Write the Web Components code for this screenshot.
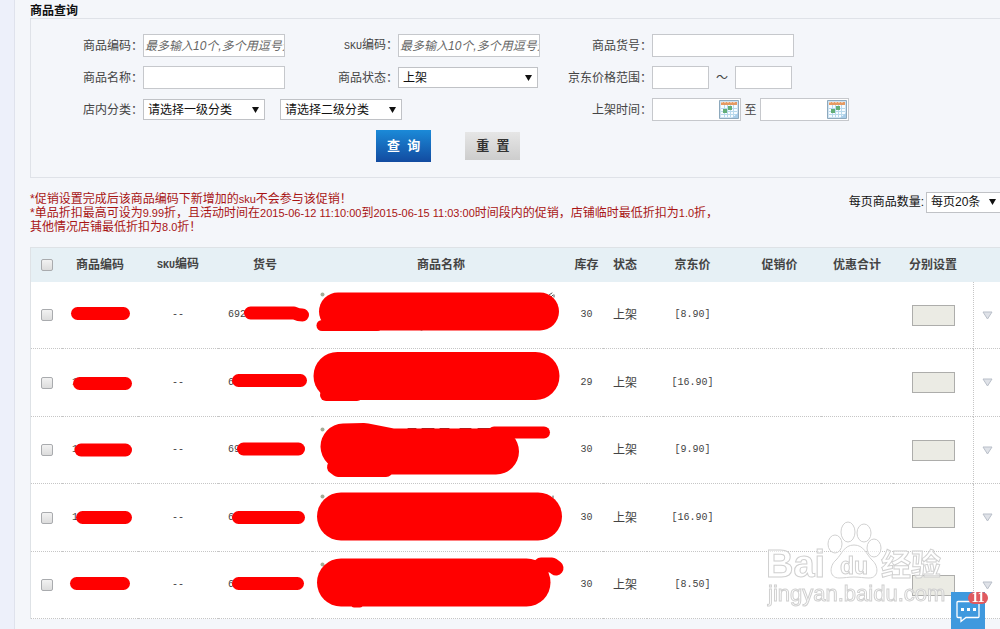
<!DOCTYPE html>
<html lang="zh-CN">
<head>
<meta charset="utf-8">
<title>商品查询</title>
<style>
  html, body { height: 100%; }
  body {
    margin: 0;
    overflow: hidden;
    background: #f4f6fa;
    color: #444;
    font: 12px/14px "Liberation Sans", "Noto Sans CJK SC", sans-serif;
  }
</style>
</head>
<body>
<goods-page>
  <search-panel></search-panel>
  <promo-notice></promo-notice>
  <goods-table></goods-table>
</goods-page>
<site-watermark></site-watermark>
<chat-button count="11"></chat-button>

<script>
(function ( doc ) {
  /**
   * Register an element whose shadow root is cloned from a template.
   */
  function define ( name, html, setup ) {
    const template = doc.createElement('template');
    template.innerHTML = html;

    customElements.define(name, class extends HTMLElement {
      constructor () {
        super();
        this.attachShadow({ mode: 'open' }).appendChild(template.content.cloneNode(true));
      }

      connectedCallback () {
        if ( setup ) setup(this, this.shadowRoot);
      }
    });
  }

  /**
   * Page frame: the side rail and the main column.
   */
  define('goods-page', `
    <style>
      :host { display: flex; min-height: 100%; }
      .rail { flex: none; width: 14px; background: #edf0fa; border-right: 1px solid #dfe2ec; }
      main { flex: 1; min-width: 0; padding-left: 15px; }
    </style>
    <div class="rail"></div>
    <main><slot></slot></main>
  `);

  /**
   * Label and control side by side.
   */
  define('field-row', `
    <style>
      :host { display: flex; align-items: center; height: 23px; }
      .label { flex: none; width: 112px; text-align: right; }
      .control { display: flex; align-items: center; }
    </style>
    <span class="label"><slot name="label"></slot></span>
    <span class="control"><slot></slot></span>
  `);

  define('select-box', `
    <style>
      :host { display: inline-grid; align-items: center; width: 122px; color: #111; }
      ::slotted(select) {
        grid-area: 1 / 1;
        appearance: none;
        box-sizing: border-box;
        width: 100%;
        height: 21px;
        margin: 0;
        padding: 0 20px 0 4px;
        border: 1px solid #c0c2c6;
        border-radius: 0;
        background: #fff;
        color: inherit;
        font: inherit;
      }
      svg { grid-area: 1 / 1; justify-self: end; margin-right: 6px; pointer-events: none; }
    </style>
    <slot></slot>
    <svg width="7" height="6" aria-hidden="true"><path d="M0 0h7L3.5 6z" fill="#111"/></svg>
  `);

  define('date-box', `
    <style>
      :host { display: inline-grid; align-items: center; width: 89px; }
      ::slotted(input) { grid-area: 1 / 1; }
      button { grid-area: 1 / 1; justify-self: end; display: block; margin: 0 2px 0 0; padding: 0; border: 0; background: none; }
      svg { display: block; }
    </style>
    <slot></slot>
    <button type="button" aria-label="日历">
      <svg width="20" height="19" viewBox="0 0 20 19">
        <path d="M.5.5h19v18H.5z" fill="#cfe3f2" stroke="#8da9bd"/>
        <path d="M2 5h16v12H2z" fill="#f7fcff"/>
        <path d="M2 2h16v3H2z" fill="#e59a63"/>
        <path d="M3 2v1M6 2v1M9 2v1M12 2v1M15 2v1" stroke="#fff3e6"/>
        <path d="M2 8.500h16M2 11.500h16M2 14.500h16M5.500 5v12M8.500 5v12M11.500 5v12M14.500 5v12" stroke="#b8d9ec"/>
        <path d="M4 9h4v4H4zM9 6h4v4H9z" fill="#62ae78"/>
        <path d="M13 18l6-5v5z" fill="#a8cde8"/>
      </svg>
    </button>
  `);

  define('search-panel', `
    <style>
      :host { display: block; }
      h2 { margin: 0; padding-top: 4px; font-size: 12px; line-height: 14px; color: #111; }
      form { margin-right: -2px; padding: 15px 0; border: 1px solid #dfe2e8; }
      .fields { display: grid; grid-template-columns: 255px 254px 1fr; row-gap: 9px; }
      .wide { grid-column: span 2; }
      .latin { font: 10px/14px "Liberation Mono", monospace; }
      input {
        box-sizing: border-box;
        width: 142px;
        height: 23px;
        margin: 0;
        padding: 0 0 0 1px;
        border: 1px solid #c6c8cc;
        background: #fff;
        color: #444;
        font: inherit;
      }
      input::placeholder { color: #666; font-style: italic; }
      input.short { width: 57px; }
      date-box input { width: 100%; padding-right: 24px; }
      .status { width: 140px; }
      .second { margin-left: 15px; }
      .tilde { width: 26px; text-align: center; }
      .until { width: 19px; text-align: center; }
      .actions { display: flex; align-items: center; gap: 34px; padding: 9px 0 0 345px; }
      .actions button {
        height: 28px;
        padding: 0 11px;
        border: 0;
        white-space: pre;
        font: bold 13px/14px "Liberation Sans", "Noto Sans CJK SC", sans-serif;
      }
      .actions .query { height: 32px; background: linear-gradient(#1b8ad8, #124ba0); color: #fff; }
      .actions .reset { background: linear-gradient(#e6e6e6, #cdcdcd); color: #333; }
    </style>
    <h2>商品查询</h2>
    <form>
      <div class="fields">
        <field-row>
          <label slot="label" for="code">商品编码：</label>
          <input id="code" placeholder="最多输入10个,多个用逗号分隔">
        </field-row>
        <field-row>
          <label slot="label" for="sku"><span class="latin">SKU</span>编码：</label>
          <input id="sku" placeholder="最多输入10个,多个用逗号分隔">
        </field-row>
        <field-row>
          <label slot="label" for="item">商品货号：</label>
          <input id="item">
        </field-row>
        <field-row>
          <label slot="label" for="name">商品名称：</label>
          <input id="name">
        </field-row>
        <field-row>
          <label slot="label" for="status">商品状态：</label>
          <select-box class="status"><select id="status"><option>上架</option></select></select-box>
        </field-row>
        <field-row>
          <label slot="label" for="low">京东价格范围：</label>
          <input id="low" class="short">
          <span class="tilde">～</span>
          <input class="short" aria-label="最高价格">
        </field-row>
        <field-row class="wide">
          <label slot="label" for="level1">店内分类：</label>
          <select-box><select id="level1"><option>请选择一级分类</option></select></select-box>
          <select-box class="second"><select aria-label="二级分类"><option>请选择二级分类</option></select></select-box>
        </field-row>
        <field-row>
          <label slot="label" for="from">上架时间：</label>
          <date-box><input id="from"></date-box>
          <label class="until" for="to">至</label>
          <date-box><input id="to"></date-box>
        </field-row>
      </div>
      <div class="actions">
        <button type="button" class="query">查  询</button>
        <button type="reset" class="reset">重  置</button>
      </div>
    </form>
  `);

  /**
   * Red notes on the promotion, with the page size at the right.
   */
  define('promo-notice', `
    <style>
      :host { display: flex; justify-content: space-between; margin: 14px -2px 13px 0; }
      .notes { color: #a81414; }
      p { margin: 0; }
      .n { font-size: 11px; }
      .size { display: flex; align-items: center; gap: 2px; height: 20px; color: #111; }
      select-box { width: 76px; }
    </style>
    <div class="notes">
      <p>*促销设置完成后该商品编码下新增加的<span class="n">sku</span>不会参与该促销！</p>
      <p>*单品折扣最高可设为<span class="n">9.99</span>折，且活动时间在<span class="n">2015-06-12 11:10:00</span>到<span class="n">2015-06-15 11:03:00</span>时间段内的促销，店铺临时最低折扣为<span class="n">1.0</span>折，</p>
      <p>其他情况店铺最低折扣为<span class="n">8.0</span>折！</p>
    </div>
    <div class="size">
      <label for="size">每页商品数量:</label>
      <select-box><select id="size"><option>每页20条</option></select></select-box>
    </div>
  `);

  /**
   * Marker strokes laid over a cell, measured from the cell's corner.
   */
  define('ink-mark', `
    <style>
      :host { position: absolute; inset: 0; color: #f00; pointer-events: none; }
      svg { display: block; width: 100%; height: 100%; overflow: visible; }
      path { fill: none; stroke: currentColor; stroke-linecap: round; stroke-linejoin: round; }
    </style>
    <svg aria-hidden="true"></svg>
  `, function ( host, root ) {
    const dot = host.hasAttribute('dot') ? '<circle cx="10.500" cy="12.500" r="2" fill="#a5ad99"/>' : '';

    root.querySelector('svg').innerHTML = dot + host.getAttribute('strokes').split('|').map(function ( part ) {
      const [ width, d, color ] = part.split(':');
      return `<path stroke-width="${width}" d="${d}"${color ? ` style="stroke: ${color}"` : ''}/>`;
    }).join('');
  });

  // each stroke is "width:path", with a colour after it when it is not red
  const goods = [
    {
      code: '', item: '692', stock: 30, price: '8.90', dot: true,
      marks: [
        '13:M15.500 31.500H61.500',
        '13:M32.500 31H76Q80 33 84.500 33',
        '1:M237 13l3-2M239 15l2-2M242 13v2M109 48h1:#555|38:M26 29.500H228|11:M10 43.500L65 43.500'
      ]
    },
    {
      code: '1', item: '6', stock: 29, price: '16.90',
      marks: [
        '13:M17.500 34.500H63.500',
        '13:M20.500 31.500H82.500',
        '48:M25.500 27H223.500|12:M14 46L45 46'
      ]
    },
    {
      code: '1', item: '69', stock: 30, price: '9.90', dot: true,
      marks: [
        '13:M19 33H63.500',
        '13:M25.500 32H80.500',
        '1:M96 11.500h8M110 11.500h12M128 11.500h9M148 11.500h11M166 11.500h20:#733|46:M31.500 29.500L52 29L80 34.500H184|12:M182 15.500H232|14:M22 50L26 53H74'
      ]
    },
    {
      code: '1', item: '6', stock: 30, price: '16.90', dot: true,
      marks: [
        '13:M20.500 33.500H63.500',
        '13:M20.500 33.500H80.500',
        '1:M237 13l2 2M241 12v2:#555|48:M29 32.500H226'
      ]
    },
    {
      code: '', item: '6', stock: 30, price: '8.50', dot: true,
      marks: [
        '13:M14.500 31.500H61.500',
        '13:M20.500 31.500H79.500',
        '48:M29 30.500H214.500|15:M229 13H240L244 16|5:M42 53H48'
      ]
    }
  ];

  const columns = [
    [ '商品编码', 76 ], [ '<span class="latin">SKU</span>编码', 80 ], [ '货号', 94 ], [ '商品名称', 0 ],
    [ '库存', 33 ], [ '状态', 44 ], [ '京东价', 91 ], [ '促销价', 83 ],
    [ '优惠合计', 72 ], [ '分别设置', 80 ], [ '', 27 ]
  ];

  function mark ( strokes, dot ) {
    return `<ink-mark strokes="${strokes}"${dot ? ' dot' : ''}></ink-mark>`;
  }

  function row ( g, i ) {
    return `
      <tr>
        <td><input type="checkbox" aria-label="选择第${i + 1}行"></td>
        <td class="code">${g.code}${mark(g.marks[0])}</td>
        <td class="num">--</td>
        <td class="item">${g.item}${mark(g.marks[1])}</td>
        <td>${mark(g.marks[2], g.dot)}</td>
        <td class="num">${g.stock}</td>
        <td>上架</td>
        <td class="num">[${g.price}]</td>
        <td></td>
        <td></td>
        <td><input class="set" disabled aria-label="分别设置"></td>
        <td class="more">
          <button type="button" aria-label="展开">
            <svg width="11" height="9"><path d="M1 1h9L5.500 8z" fill="#dfe2e8" stroke="#b9bfc9"/></svg>
          </button>
        </td>
      </tr>`;
  }

  define('goods-table', `
    <style>
      :host { display: block; border: solid #dee2e6; border-width: 1px 0 0 1px; background: #fff; }
      table { width: 100%; table-layout: fixed; border-spacing: 0; }
      th { height: 34px; padding: 0; background: #e6f0f5; color: #444; white-space: nowrap; }
      td {
        position: relative;
        box-sizing: border-box;
        height: 67px;
        padding: 0;
        border-bottom: 1px dotted #c6c6c6;
        text-align: center;
      }
      tr:nth-child(even) td { height: 68px; }
      .num, .item, .code { font: 10px/14px "Liberation Mono", monospace; }
      .latin { font-family: "Liberation Mono", monospace; font-size: 10px; }
      .item, .code { padding-left: 10px; text-align: left; }
      .more { border-left: 1px dotted #c6c6c6; }
      input[type=checkbox] {
        appearance: none;
        display: block;
        box-sizing: border-box;
        width: 12px;
        height: 12px;
        margin: 0 auto;
        border: 1px solid #a9abae;
        border-radius: 2px;
        background: linear-gradient(#f2f2f2, #dcdcdc);
      }
      .set {
        display: block;
        box-sizing: border-box;
        width: 43px;
        height: 21px;
        margin: 0 auto;
        border: 1px solid #adadab;
        background: #ebebe4;
      }
      button { display: block; margin: 0 auto; padding: 0; border: 0; background: none; }
      svg { display: block; }
    </style>
    <table>
      <colgroup>
        <col style="width: 31px">
        ${columns.map(c => c[1] ? `<col style="width: ${c[1]}px">` : '<col>').join('')}
      </colgroup>
      <thead>
        <tr>
          <th><input type="checkbox" aria-label="全选"></th>
          ${columns.map(c => `<th>${c[0]}</th>`).join('')}
        </tr>
      </thead>
      <tbody>${goods.map(row).join('')}</tbody>
    </table>
  `);

  define('site-watermark', `
    <style>
      :host { position: fixed; right: 50px; bottom: 19px; pointer-events: none; }
      svg { display: block; }
      text, path, ellipse { fill: #fff; fill-opacity: .6; stroke: #d0d0d0; stroke-width: 1; }
      text { font-family: "Liberation Sans", "Noto Sans CJK SC", sans-serif; }
      .bold { font-weight: bold; }
    </style>
    <svg width="185" height="90" aria-hidden="true">
      <text class="bold" x="1" y="57" font-size="38">Bai</text>
      <ellipse cx="70" cy="24" rx="7" ry="9"/>
      <ellipse cx="83" cy="12" rx="7" ry="10"/>
      <ellipse cx="99" cy="13" rx="7" ry="9"/>
      <ellipse cx="109" cy="28" rx="7" ry="9"/>
      <path d="M89 25c10 0 12 9 18 15 7 6 7 18-3 18-6 0-9-1-15-1s-9 1-15 1c-10 0-10-12-3-18 6-6 8-15 18-15z"/>
      <text class="bold" x="75" y="54" font-size="23">du</text>
      <text class="bold" x="116" y="55" font-size="30">经验</text>
      <text x="3" y="81" font-size="22">jingyan.baidu.com</text>
    </svg>
  `);

  define('chat-button', `
    <style>
      :host { position: fixed; right: 15px; bottom: 0; }
      button { display: block; width: 34px; height: 37px; padding: 0; border: 0; background: #3f99de; }
      svg { display: block; margin: 0 auto; }
      .badge {
        position: absolute;
        top: 0;
        right: -3px;
        width: 20px;
        border-radius: 6px;
        background: #e05a5f;
        color: #fff;
        text-align: center;
        font: bold 14px/12px "Liberation Serif", serif;
      }
    </style>
    <button type="button" aria-label="在线客服">
      <svg width="24" height="24" viewBox="0 0 24 24" fill="none" stroke="#fff">
        <path d="M2 2.500h20a1 1 0 0 1 1 1v14a1 1 0 0 1-1 1H10l-5 4v-4H2a1 1 0 0 1-1-1v-14a1 1 0 0 1 1-1z" stroke-width="1.300"/>
        <path d="M5 10.500h3M11 10.500h3M17 10.500h3" stroke-width="3"/>
      </svg>
    </button>
    <span class="badge"></span>
  `, function ( host, root ) {
    root.querySelector('.badge').textContent = host.getAttribute('count');
  });
})( document );
</script>
</body>
</html>
